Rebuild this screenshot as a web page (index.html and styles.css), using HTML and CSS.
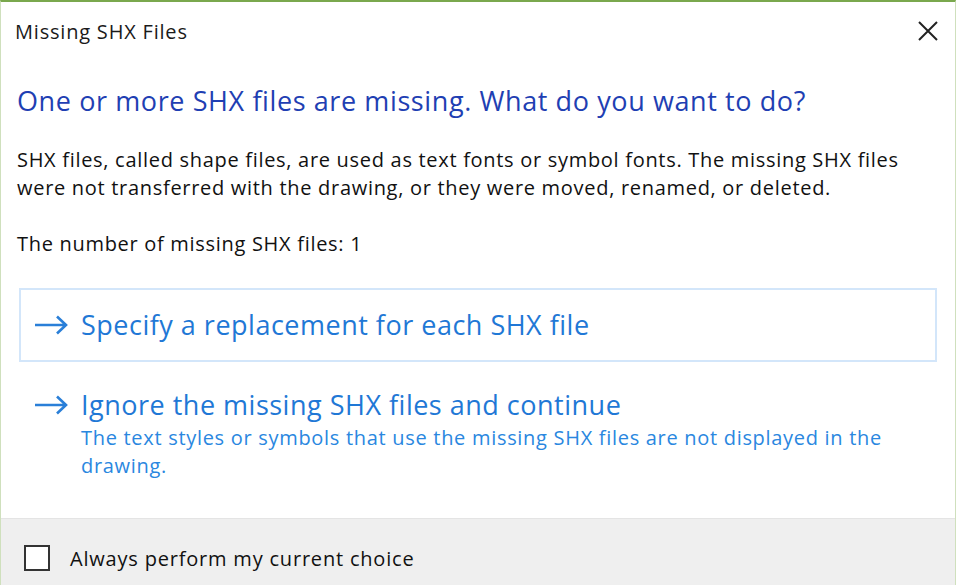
FILE: index.html
```html
<!DOCTYPE html>
<html>
<head>
<meta charset="utf-8">
<title>Missing SHX Files</title>
<link rel="stylesheet" href="styles.css">
</head>
<body>
<div class="window">
	<div class="titlebar">
		<span class="title">Missing SHX Files</span>
		<svg class="close" width="20" height="20" viewBox="0 0 20 20">
			<path d="M1 1 L19 19 M19 1 L1 19" stroke="#222" stroke-width="2" fill="none"/>
		</svg>
	</div>
	<div class="content">
		<h1 class="heading">One or more SHX files are missing. What do you want to do?</h1>
		<p class="text">SHX files, called shape files, are used as text fonts or symbol fonts. The missing SHX files were not transferred with the drawing, or they were moved, renamed, or deleted.</p>
		<p class="text count">The number of missing SHX files: 1</p>

		<div class="option selected">
			<svg class="arrow" width="34" height="20" viewBox="0 0 34 20">
				<path d="M1 10 H32 M23 1.5 L32 10 L23 18.5" stroke="#2a7fd8" stroke-width="2.6" fill="none"/>
			</svg>
			<div class="opt-body">
				<div class="opt-title">Specify a replacement for each SHX file</div>
			</div>
		</div>

		<div class="option">
			<svg class="arrow" width="34" height="20" viewBox="0 0 34 20">
				<path d="M1 10 H32 M23 1.5 L32 10 L23 18.5" stroke="#2a7fd8" stroke-width="2.6" fill="none"/>
			</svg>
			<div class="opt-body">
				<div class="opt-title">Ignore the missing SHX files and continue</div>
				<div class="opt-desc">The text styles or symbols that use the missing SHX files are not displayed in the drawing.</div>
			</div>
		</div>
	</div>
	<div class="footer">
		<span class="checkbox"></span>
		<span class="check-label">Always perform my current choice</span>
	</div>
</div>
</body>
</html>
```

FILE: styles.css
```css
html, body {
	margin: 0;
	padding: 0;
}
body {
	font-family: "Open Sans", "Noto Sans", sans-serif;
	background: #ffffff;
}
.window {
	width: 956px;
	height: 585px;
	box-sizing: border-box;
	border-top: 2px solid #7aa84e;
	border-left: 1px solid #cfe0bd;
	border-right: 1px solid #cfe0bd;
	display: flex;
	flex-direction: column;
	background: #ffffff;
}
.titlebar {
	height: 58px;
	flex: none;
	display: flex;
	align-items: center;
	justify-content: space-between;
	padding: 0 17px 0 14px;
}
.title {
	font-size: 20px;
	color: #1a1a1a;
	letter-spacing: 0.8px;
}
.close {
	display: block;
}
.content {
	flex: 1;
	padding: 0 18px 0 16px;
}
.heading {
	margin: 24px 0 0 0;
	font-size: 27px;
	font-weight: 400;
	color: #1f3fb3;
	letter-spacing: 0.6px;
	line-height: 34px;
}
.text {
	margin: 28px 0 0 0;
	font-size: 20px;
	line-height: 28px;
	color: #111;
	letter-spacing: 0.7px;
	width: 910px;
}
.count {
	margin-top: 28px;
}
.option {
	display: flex;
	align-items: flex-start;
	margin-left: 2px;
	padding: 0 13px;
	border: 2px solid transparent;
}
.option.selected {
	margin-top: 30px;
	border-color: #d3e6fa;
	height: 74px;
	box-sizing: border-box;
	align-items: center;
}
.arrow {
	flex: none;
	margin-right: 13px;
}
.option + .option {
	margin-top: 22px;
}
.option + .option .arrow {
	margin-top: 9px;
}
.opt-title {
	font-size: 27px;
	line-height: 38px;
	color: #1f78d6;
	letter-spacing: 0.5px;
}
.opt-desc {
	font-size: 20px;
	line-height: 28px;
	color: #2a87df;
	letter-spacing: 0.7px;
	width: 815px;
}
.footer {
	height: 67px;
	flex: none;
	background: #efefef;
	border-top: 1px solid #e4e4e4;
	display: flex;
	align-items: center;
	padding: 12px 0 0 23px;
	box-sizing: border-box;
}
.checkbox {
	width: 22px;
	height: 22px;
	border: 2px solid #333;
	background: #fff;
	margin-right: 20px;
}
.check-label {
	font-size: 20px;
	color: #111;
	letter-spacing: 0.8px;
}
```
